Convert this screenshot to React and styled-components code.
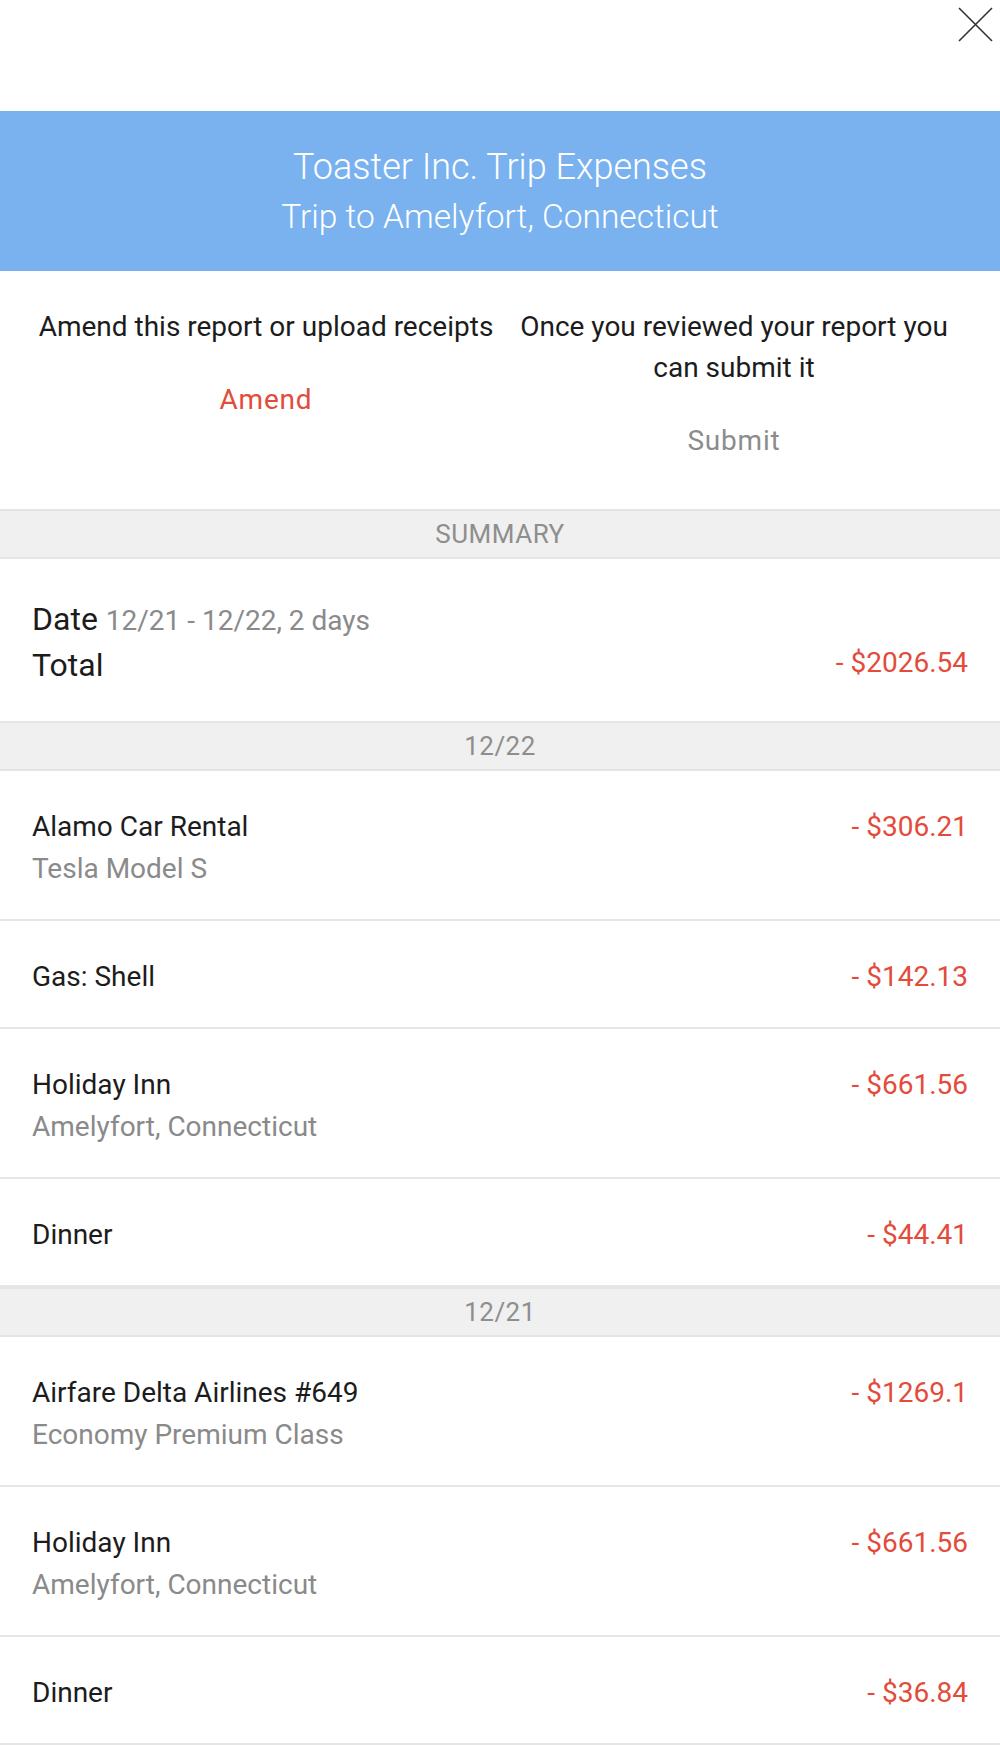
import React from "react";
import styled, { createGlobalStyle } from "styled-components";

const GlobalStyle = createGlobalStyle`
  html, body { margin: 0; padding: 0; background: #ffffff; }
  body { font-family: Roboto, "Noto Sans", "Liberation Sans", sans-serif; color: #1c1c1c; -webkit-font-smoothing: antialiased; }
  * { box-sizing: border-box; }
`;

const Page = styled.div`
  width: 1000px;
  background: #fff;
`;

const TopBar = styled.div`
  height: 111px;
  display: flex;
  justify-content: flex-end;
  align-items: flex-start;
  padding: 7px 7px 0 0;
`;

const CloseButton = styled.button`
  width: 35px;
  height: 35px;
  padding: 0;
  border: none;
  background: transparent;
  cursor: pointer;
  display: flex;
`;

const Header = styled.header`
  height: 160px;
  background: #79b2ef;
  color: #ffffff;
  padding: 32px 20px 0;
  text-align: center;
  font-weight: 300;
  line-height: 49px;
`;

const HeaderLine = styled.div`
  font-size: ${(p) => p.$size}px;
`;

const Actions = styled.section`
  height: 238px;
  padding: 35px 32px 0;
  display: grid;
  grid-template-columns: 1fr 1fr;
`;

const ActionCol = styled.div`
  display: flex;
  flex-direction: column;
  align-items: center;
  text-align: center;
`;

const ActionText = styled.div`
  font-size: 28px;
  line-height: 41px;
  color: #1c1c1c;
  padding: 0 6px;
`;

const ActionButton = styled.button`
  margin-top: 32px;
  border: none;
  background: transparent;
  padding: 0;
  font-family: inherit;
  font-size: 28px;
  line-height: 41px;
  letter-spacing: 0.8px;
  color: ${(p) => (p.$primary ? "#e34b3b" : "#8c8c8c")};
  cursor: pointer;
`;

const Band = styled.div`
  height: 50px;
  background: #f0f0f0;
  border-top: 2px solid #e4e4e4;
  border-bottom: 2px solid #e4e4e4;
  display: flex;
  align-items: center;
  justify-content: center;
  font-size: 26px;
  letter-spacing: 0.5px;
  color: #8e8e8e;
`;

const SummaryRow = styled.div`
  height: 162px;
  padding: 40px 32px 0;
  display: flex;
  justify-content: space-between;
  align-items: flex-start;
`;

const SummaryLabels = styled.div`
  display: flex;
  flex-direction: column;
  gap: 4px;
`;

const SummaryLine = styled.div`
  font-size: 32px;
  line-height: 40px;
  color: #1c1c1c;
`;

const SummaryValue = styled.span`
  font-size: 28px;
  color: #8a8a8a;
`;

const Row = styled.div`
  padding: 41px 32px 35px;
  display: flex;
  justify-content: space-between;
  align-items: flex-start;
  & + & { border-top: 2px solid #e6e6e6; }
  &:last-child { border-bottom: 2px solid #e6e6e6; }
`;

const RowText = styled.div`
  display: flex;
  flex-direction: column;
  gap: 12px;
`;

const RowTitle = styled.div`
  font-size: 28px;
  line-height: 30px;
  color: #1c1c1c;
`;

const RowSub = styled.div`
  font-size: 28px;
  line-height: 30px;
  color: #8a8a8a;
`;

const Amount = styled.div`
  font-size: 28px;
  line-height: ${(p) => (p.$tall ? "40px" : "30px")};
  color: #e34b3b;
  white-space: nowrap;
  align-self: ${(p) => (p.$bottom ? "flex-end" : "flex-start")};
  margin-bottom: ${(p) => (p.$bottom ? "38px" : "0")};
`;

const days = [
  {
    date: "12/22",
    items: [
      { title: "Alamo Car Rental", sub: "Tesla Model S", amount: "- $306.21" },
      { title: "Gas: Shell", amount: "- $142.13" },
      { title: "Holiday Inn", sub: "Amelyfort, Connecticut", amount: "- $661.56" },
      { title: "Dinner", amount: "- $44.41" },
    ],
  },
  {
    date: "12/21",
    items: [
      { title: "Airfare Delta Airlines #649", sub: "Economy Premium Class", amount: "- $1269.1" },
      { title: "Holiday Inn", sub: "Amelyfort, Connecticut", amount: "- $661.56" },
      { title: "Dinner", amount: "- $36.84" },
    ],
  },
];

const CloseIcon = () => (
  <svg width="35" height="35" viewBox="0 0 35 35">
    <path d="M1 1 L34 34 M34 1 L1 34" stroke="#333" strokeWidth="1.6" fill="none" />
  </svg>
);

const DayGroup = ({ date, items }) => (
  <>
    <Band>{date}</Band>
    <div>
      {items.map((it, i) => (
        <Row key={i}>
          <RowText>
            <RowTitle>{it.title}</RowTitle>
            {it.sub && <RowSub>{it.sub}</RowSub>}
          </RowText>
          <Amount>{it.amount}</Amount>
        </Row>
      ))}
    </div>
  </>
);

export default function App() {
  return (
    <Page>
      <GlobalStyle />
      <TopBar>
        <CloseButton aria-label="Close">
          <CloseIcon />
        </CloseButton>
      </TopBar>
      <Header>
        <HeaderLine $size={36}>Toaster Inc. Trip Expenses</HeaderLine>
        <HeaderLine $size={33.5}>Trip to Amelyfort, Connecticut</HeaderLine>
      </Header>
      <Actions>
        <ActionCol>
          <ActionText>Amend this report or upload receipts</ActionText>
          <ActionButton $primary>Amend</ActionButton>
        </ActionCol>
        <ActionCol>
          <ActionText>Once you reviewed your report you can submit it</ActionText>
          <ActionButton>Submit</ActionButton>
        </ActionCol>
      </Actions>
      <Band>SUMMARY</Band>
      <SummaryRow>
        <SummaryLabels>
          <SummaryLine>
            Date <SummaryValue>12/21 - 12/22, 2 days</SummaryValue>
          </SummaryLine>
          <SummaryLine>Total</SummaryLine>
        </SummaryLabels>
        <Amount $tall $bottom>- $2026.54</Amount>
      </SummaryRow>
      {days.map((d) => (
        <DayGroup key={d.date} date={d.date} items={d.items} />
      ))}
    </Page>
  );
}
